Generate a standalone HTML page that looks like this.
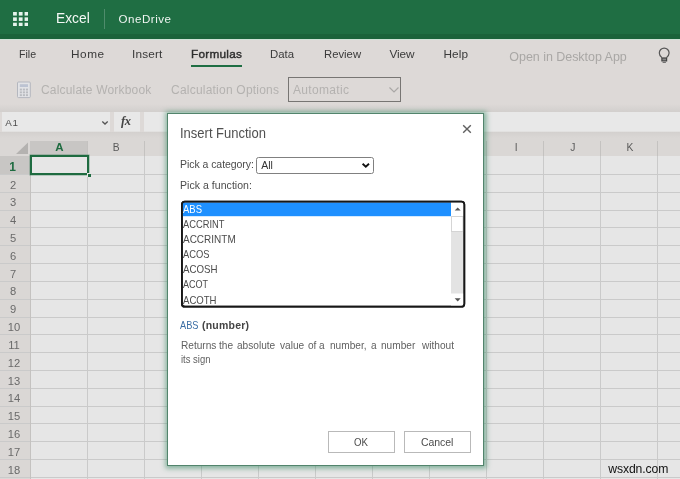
<!DOCTYPE html>
<html><head><meta charset="utf-8"><title>Excel - Insert Function</title>
<style>
html,body{margin:0;padding:0}
body{width:680px;height:479px;position:relative;overflow:hidden;background:#e6e6e6;font-family:"Liberation Sans",sans-serif}
.a{position:absolute}
.t{transform-origin:0 0;position:absolute;white-space:pre;line-height:20px;font-family:"Liberation Sans",sans-serif}
#hdr{left:0;top:0;width:680px;height:39px;background:#1f6e43}
#hdrb{left:0;top:33.5px;width:680px;height:5.5px;background:#1b633b}
#hdrl{left:0;top:39px;width:680px;height:1px;background:#cfe2d7}
#rib{left:0;top:39px;width:680px;height:73px;background:#ddd9d7}
#ribsh{left:0;top:104px;width:680px;height:8px;background:linear-gradient(#ddd9d7,#d2cfcd)}
#fbar{left:0;top:112px;width:680px;height:20px;background:#ddd9d7}
.fb{position:absolute;top:112px;height:19px;background:#e8e8e8;border-bottom:1px solid #e2e1e0}
#colh{left:0;top:132px;width:680px;height:24px;background:#dad7d5}
#colhg{left:0;top:132px;width:680px;height:6px;background:linear-gradient(#d3d0ce,#dad7d5)}
#rowh{left:0;top:156px;width:30px;height:324px;background:#dad7d5}
#selc{left:30px;top:141px;width:57px;height:15px;background:#c8c6c4}
#selr{left:0;top:156px;width:30px;height:18.5px;background:#c8c6c4}
.hl{position:absolute;left:0;width:680px;height:1px;background:#cacaca}
.vl{position:absolute;top:156px;width:1px;height:324px;background:#cacaca}
.hs{position:absolute;top:141px;width:1px;height:15px;background:#c4c2c0}
#rhl{left:29.5px;top:156px;width:1px;height:324px;background:#c4c2c0}
#cell{left:30px;top:155px;width:55px;height:16px;border:2px solid #1e6b40;box-shadow:0 0 0 .5px rgba(30,107,64,.5)}
#hand{left:86.5px;top:173px;width:3px;height:3px;background:#1e6b40;border:1px solid #e6e6e6;border-right:0;border-bottom:0}
#dlg{left:167px;top:113px;width:315px;height:351px;background:#fff;border:1px solid #52846c;box-shadow:0 0 5px 2.5px rgba(50,135,95,.55)}
#sel{left:256px;top:157px;width:116px;height:15px;border:1px solid #808080;border-radius:2.5px;background:#fff}
.btn{position:absolute;top:431px;width:65px;height:20px;border:1px solid #b9b9b9;background:#fff}
#ribsel{left:288px;top:77px;width:111px;height:23px;border:1px solid #777573}
#ful{left:191px;top:64.6px;width:50.5px;height:2.4px;background:#1f6e43}
#sep{left:104.3px;top:9px;width:1px;height:20px;background:#4f8c6c}
#w{position:absolute;left:0;top:0;width:680px;height:479px;overflow:hidden;will-change:transform}
</style></head><body><div id="w">
<div class="a" id="hdr"></div><div class="a" id="hdrb"></div>
<div class="a" id="rib"></div><div class="a" id="hdrl"></div><div class="a" id="ribsh"></div>
<div class="a" id="fbar"></div>
<div class="fb" style="left:2px;width:107.5px"></div>
<div class="fb" style="left:113.5px;width:26.5px"></div>
<div class="fb" style="left:143.5px;width:537px"></div>
<div class="a" id="colh"></div><div class="a" id="colhg"></div>
<div class="a" id="rowh"></div>
<div class="a" id="selc"></div><div class="a" id="selr"></div>
<div class="hl" style="top:174.00px"></div><div class="hl" style="top:191.82px"></div><div class="hl" style="top:209.64px"></div><div class="hl" style="top:227.46px"></div><div class="hl" style="top:245.28px"></div><div class="hl" style="top:263.10px"></div><div class="hl" style="top:280.92px"></div><div class="hl" style="top:298.74px"></div><div class="hl" style="top:316.56px"></div><div class="hl" style="top:334.38px"></div><div class="hl" style="top:352.20px"></div><div class="hl" style="top:370.02px"></div><div class="hl" style="top:387.84px"></div><div class="hl" style="top:405.66px"></div><div class="hl" style="top:423.48px"></div><div class="hl" style="top:441.30px"></div><div class="hl" style="top:459.12px"></div><div class="hl" style="top:476.94px"></div>
<div class="vl" style="left:86.60px"></div><div class="hs" style="left:86.60px"></div><div class="vl" style="left:143.67px"></div><div class="hs" style="left:143.67px"></div><div class="vl" style="left:200.74px"></div><div class="hs" style="left:200.74px"></div><div class="vl" style="left:257.81px"></div><div class="hs" style="left:257.81px"></div><div class="vl" style="left:314.88px"></div><div class="hs" style="left:314.88px"></div><div class="vl" style="left:371.95px"></div><div class="hs" style="left:371.95px"></div><div class="vl" style="left:429.02px"></div><div class="hs" style="left:429.02px"></div><div class="vl" style="left:486.09px"></div><div class="hs" style="left:486.09px"></div><div class="vl" style="left:543.16px"></div><div class="hs" style="left:543.16px"></div><div class="vl" style="left:600.23px"></div><div class="hs" style="left:600.23px"></div><div class="vl" style="left:657.30px"></div><div class="hs" style="left:657.30px"></div>
<div class="a" id="rhl"></div>
<svg class="a" style="left:15px;top:142px" width="14" height="13" viewBox="0 0 14 13"><polygon points="13,0.5 13,12 1,12" fill="#b4b2b0"/></svg>
<div class="a" id="cell"></div><div class="a" id="hand"></div>
<!-- header icons -->
<svg class="a" style="left:12.9px;top:11.9px" width="15.5" height="14.4" viewBox="0 0 15.5 14.5">
<g fill="#e6f4ec">
<rect x="0" y="0" width="3.8" height="3.6"/><rect x="5.8" y="0" width="3.8" height="3.6"/><rect x="11.6" y="0" width="3.8" height="3.6"/>
<rect x="0" y="5.4" width="3.8" height="3.6"/><rect x="5.8" y="5.4" width="3.8" height="3.6"/><rect x="11.6" y="5.4" width="3.8" height="3.6"/>
<rect x="0" y="10.8" width="3.8" height="3.6"/><rect x="5.8" y="10.8" width="3.8" height="3.6"/><rect x="11.6" y="10.8" width="3.8" height="3.6"/>
</g></svg>
<div class="a" id="sep"></div>
<div class="a" id="ful"></div>
<!-- lightbulb -->
<svg class="a" style="left:656px;top:45px" width="16" height="20" viewBox="0 0 16 20">
<path d="M5.9 12.6 C4.3 11.3 3.3 9.8 3.3 8 A4.9 4.9 0 0 1 13.1 8 C13.1 9.8 12.1 11.3 10.5 12.6" fill="none" stroke="#555" stroke-width="1.2"/>
<rect x="5.9" y="13" width="4.7" height="2.9" fill="#8a8a8a" stroke="#444" stroke-width="1.2"/>
<rect x="6.6" y="17" width="3.3" height="0.9" fill="#666"/>
</svg>
<!-- calc icon -->
<svg class="a" style="left:15.5px;top:80.5px" width="16" height="18" viewBox="0 0 16 18">
<rect x="1.5" y="1" width="12.8" height="15.6" rx="1" fill="#e2e3e6" stroke="#b4b7bf" stroke-width="1"/>
<rect x="3.8" y="3.2" width="8.2" height="2.8" fill="#bcc3d2"/>
<g fill="#b9bbc0"><rect x="3.8" y="7.6" width="2.1" height="1.9"/><rect x="6.85" y="7.6" width="2.1" height="1.9"/><rect x="9.9" y="7.6" width="2.1" height="1.9"/>
<rect x="3.8" y="10.4" width="2.1" height="1.9"/><rect x="6.85" y="10.4" width="2.1" height="1.9"/><rect x="9.9" y="10.4" width="2.1" height="1.9"/>
<rect x="3.8" y="13.2" width="2.1" height="1.9"/><rect x="6.85" y="13.2" width="2.1" height="1.9"/><rect x="9.9" y="13.2" width="2.1" height="1.9"/></g>
</svg>
<div class="a" id="ribsel"></div>
<svg class="a" style="left:388px;top:86px" width="12" height="8" viewBox="0 0 12 8"><path d="M1.5 1.5 L6 6 L10.5 1.5" fill="none" stroke="#aaa8a6" stroke-width="1.2"/></svg>
<!-- name box chevron / fx -->
<svg class="a" style="left:101px;top:120px" width="8" height="6" viewBox="0 0 8 6"><path d="M1.3 1.5 L4 4 L6.7 1.5" fill="none" stroke="#555" stroke-width="1.3"/></svg>
<span class="t" style="left:121px;top:111px;font-family:'Liberation Serif',serif;font-style:italic;font-weight:700;font-size:12.5px;color:#444;letter-spacing:-0.3px">fx</span>
<span class="t" style="left:55.61px;top:8.00px;font-size:15.5px;color:#f4f8f5;transform:scaleX(0.8914);">Excel</span>
<span class="t" style="left:118.50px;top:9.00px;font-size:11.6px;color:#f0f5f2;letter-spacing:0.497px;">OneDrive</span>
<span class="t" style="left:18.50px;top:44.00px;font-size:11.8px;color:#3a3a3a;transform:scaleX(0.8998);">File</span>
<span class="t" style="left:71.00px;top:44.00px;font-size:11.8px;color:#3a3a3a;letter-spacing:0.564px;">Home</span>
<span class="t" style="left:132.00px;top:44.00px;font-size:11.8px;color:#3a3a3a;letter-spacing:0.155px;">Insert</span>
<span class="t" style="left:191.00px;top:44.00px;font-size:11.8px;color:#2e2e2e;letter-spacing:0.248px;-webkit-text-stroke:0.4px #2e2e2e;">Formulas</span>
<span class="t" style="left:270.00px;top:44.00px;font-size:11.8px;color:#3a3a3a;transform:scaleX(0.9662);">Data</span>
<span class="t" style="left:324.00px;top:44.00px;font-size:11.8px;color:#3a3a3a;transform:scaleX(0.9576);">Review</span>
<span class="t" style="left:389.50px;top:44.00px;font-size:11.8px;color:#3a3a3a;letter-spacing:-0.112px;">View</span>
<span class="t" style="left:443.50px;top:44.00px;font-size:11.8px;color:#3a3a3a;letter-spacing:0.100px;">Help</span>
<span class="t" style="left:509.30px;top:47.00px;font-size:12.5px;color:#a9a7a5;letter-spacing:-0.037px;">Open in Desktop App</span>
<span class="t" style="left:41.00px;top:80.00px;font-size:12px;color:#b4b2b0;letter-spacing:0.185px;">Calculate Workbook</span>
<span class="t" style="left:171.00px;top:80.00px;font-size:12px;color:#b4b2b0;letter-spacing:0.219px;">Calculation Options</span>
<span class="t" style="left:293.00px;top:80.00px;font-size:12px;color:#b4b2b0;letter-spacing:0.331px;">Automatic</span>
<span class="t" style="left:5.20px;top:113.00px;font-size:9.8px;color:#4c4c4c;letter-spacing:0.800px;">A1</span>
<span class="t" style="left:608.30px;top:459.00px;font-size:12.2px;color:#111;letter-spacing:-0.113px;">wsxdn.com</span>
<span class="t" style="left:55.20px;top:137.00px;font-size:11.5px;color:#1e6b40;font-weight:700;">A</span>
<span class="t" style="left:112.77px;top:138.00px;font-size:10.3px;color:#5a5a5a;">B</span>
<span class="t" style="left:169.34px;top:138.00px;font-size:10.3px;color:#5a5a5a;">C</span>
<span class="t" style="left:226.91px;top:138.00px;font-size:10.3px;color:#5a5a5a;">D</span>
<span class="t" style="left:283.98px;top:138.00px;font-size:10.3px;color:#5a5a5a;">E</span>
<span class="t" style="left:341.55px;top:138.00px;font-size:10.3px;color:#5a5a5a;">F</span>
<span class="t" style="left:397.62px;top:138.00px;font-size:10.3px;color:#5a5a5a;">G</span>
<span class="t" style="left:455.19px;top:138.00px;font-size:10.3px;color:#5a5a5a;">H</span>
<span class="t" style="left:514.76px;top:138.00px;font-size:10.3px;color:#5a5a5a;">I</span>
<span class="t" style="left:570.33px;top:138.00px;font-size:10.3px;color:#5a5a5a;">J</span>
<span class="t" style="left:626.40px;top:138.00px;font-size:10.3px;color:#5a5a5a;">K</span>
<span class="t" style="left:9.30px;top:157.00px;font-size:12px;color:#1e6b40;font-weight:700;">1</span>
<span class="t" style="left:10.00px;top:175.00px;font-size:11.2px;color:#6a6a6a;">2</span>
<span class="t" style="left:10.00px;top:192.00px;font-size:11.2px;color:#6a6a6a;">3</span>
<span class="t" style="left:10.00px;top:210.00px;font-size:11.2px;color:#6a6a6a;">4</span>
<span class="t" style="left:10.00px;top:228.00px;font-size:11.2px;color:#6a6a6a;">5</span>
<span class="t" style="left:10.00px;top:246.00px;font-size:11.2px;color:#6a6a6a;">6</span>
<span class="t" style="left:10.00px;top:264.00px;font-size:11.2px;color:#6a6a6a;">7</span>
<span class="t" style="left:10.00px;top:281.00px;font-size:11.2px;color:#6a6a6a;">8</span>
<span class="t" style="left:10.00px;top:299.00px;font-size:11.2px;color:#6a6a6a;">9</span>
<span class="t" style="left:7.79px;top:317.00px;font-size:11.2px;color:#6a6a6a;">10</span>
<span class="t" style="left:8.20px;top:335.00px;font-size:11.2px;color:#6a6a6a;">11</span>
<span class="t" style="left:7.79px;top:353.00px;font-size:11.2px;color:#6a6a6a;">12</span>
<span class="t" style="left:7.79px;top:371.00px;font-size:11.2px;color:#6a6a6a;">13</span>
<span class="t" style="left:7.79px;top:388.00px;font-size:11.2px;color:#6a6a6a;">14</span>
<span class="t" style="left:7.79px;top:406.00px;font-size:11.2px;color:#6a6a6a;">15</span>
<span class="t" style="left:7.79px;top:424.00px;font-size:11.2px;color:#6a6a6a;">16</span>
<span class="t" style="left:7.79px;top:442.00px;font-size:11.2px;color:#6a6a6a;">17</span>
<span class="t" style="left:7.79px;top:460.00px;font-size:11.2px;color:#6a6a6a;">18</span>
<!-- dialog -->
<div class="a" id="dlg"></div>
<svg class="a" style="left:462px;top:124px" width="10" height="10" viewBox="0 0 10 10"><path d="M1.2 1.2 L8.8 8.8 M8.8 1.2 L1.2 8.8" stroke="#606060" stroke-width="1.4" fill="none"/></svg>
<div class="a" id="sel"></div>
<svg class="a" style="left:361px;top:162px" width="10" height="7" viewBox="0 0 10 7"><path d="M1.6 1.8 L4.8 4.7 L8 1.8" fill="none" stroke="#111" stroke-width="1.9"/></svg>
<svg class="a" style="left:180px;top:199px" width="288" height="111" viewBox="180 199 288 111">
<rect x="181.9" y="201.6" width="282.4" height="105.1" rx="3" fill="#fff" stroke="#171717" stroke-width="1.8"/>
<rect x="182.8" y="202.5" width="268.2" height="13.7" fill="#1e90ff"/>
<rect x="451" y="202.5" width="12.4" height="103.4" fill="#e3e3e3"/>
<rect x="451" y="202.5" width="12.4" height="13.7" fill="#fff"/>
<rect x="451.4" y="216.6" width="11.6" height="14.8" fill="#fff" stroke="#cdcdcd" stroke-width=".8"/>
<rect x="451" y="293.5" width="12.4" height="12.4" fill="#fff"/>
<polygon points="454.7,210.5 460.7,210.5 457.7,207.6" fill="#555"/>
<polygon points="454.7,298.3 460.7,298.3 457.7,301.4" fill="#555"/>
<rect x="181.9" y="201.6" width="282.4" height="105.1" rx="3" fill="none" stroke="#171717" stroke-width="1.8"/>
</svg>
<div class="btn" style="left:328px"></div><div class="btn" style="left:404px"></div>
<span class="t" style="left:179.77px;top:123.00px;font-size:14px;color:#505050;transform:scaleX(0.9283);">Insert Function</span>
<span class="t" style="left:180.00px;top:154.00px;font-size:10.5px;color:#4c4c4c;letter-spacing:-0.052px;">Pick a category:</span>
<span class="t" style="left:261.20px;top:155.00px;font-size:10.5px;color:#333;letter-spacing:0.032px;">All</span>
<span class="t" style="left:180.00px;top:175.00px;font-size:10.5px;color:#4c4c4c;letter-spacing:0.048px;">Pick a function:</span>
<span class="t" style="left:183.00px;top:199.00px;font-size:10.5px;color:#fff;transform:scaleX(0.9045);">ABS</span>
<span class="t" style="left:183.00px;top:214.00px;font-size:10.5px;color:#4c4c4c;transform:scaleX(0.8889);">ACCRINT</span>
<span class="t" style="left:183.00px;top:229.00px;font-size:10.5px;color:#4c4c4c;transform:scaleX(0.9512);">ACCRINTM</span>
<span class="t" style="left:183.00px;top:244.00px;font-size:10.5px;color:#4c4c4c;transform:scaleX(0.8907);">ACOS</span>
<span class="t" style="left:183.00px;top:259.00px;font-size:10.5px;color:#4c4c4c;transform:scaleX(0.9250);">ACOSH</span>
<span class="t" style="left:183.00px;top:274.00px;font-size:10.5px;color:#4c4c4c;transform:scaleX(0.8604);">ACOT</span>
<span class="t" style="left:183.00px;top:290.00px;font-size:10.5px;color:#4c4c4c;transform:scaleX(0.9124);">ACOTH</span>
<span class="t" style="left:180.00px;top:315.00px;font-size:10.5px;color:#3b6ea5;transform:scaleX(0.8807);">ABS</span>
<span class="t" style="left:202.00px;top:315.00px;font-size:10.5px;color:#444;font-weight:700;letter-spacing:0.214px;">(number)</span>
<span class="t" style="left:180.98px;top:335.00px;font-size:10.5px;color:#606060;transform:scaleX(0.9624);">Returns</span>
<span class="t" style="left:218.90px;top:335.00px;font-size:10.5px;color:#606060;transform:scaleX(0.9624);">the</span>
<span class="t" style="left:237.07px;top:335.00px;font-size:10.5px;color:#606060;transform:scaleX(0.9624);">absolute</span>
<span class="t" style="left:279.74px;top:335.00px;font-size:10.5px;color:#606060;transform:scaleX(0.9624);">value</span>
<span class="t" style="left:307.85px;top:335.00px;font-size:10.5px;color:#606060;transform:scaleX(0.9624);">of</span>
<span class="t" style="left:319.41px;top:335.00px;font-size:10.5px;color:#606060;transform:scaleX(0.9624);">a</span>
<span class="t" style="left:330.09px;top:335.00px;font-size:10.5px;color:#606060;transform:scaleX(0.9624);">number,</span>
<span class="t" style="left:370.86px;top:335.00px;font-size:10.5px;color:#606060;transform:scaleX(0.9624);">a</span>
<span class="t" style="left:380.53px;top:335.00px;font-size:10.5px;color:#606060;transform:scaleX(0.9624);">number</span>
<span class="t" style="left:421.83px;top:335.00px;font-size:10.5px;color:#606060;transform:scaleX(0.9624);">without</span>
<span class="t" style="left:180.90px;top:349.00px;font-size:10.5px;color:#606060;transform:scaleX(0.9014);">its sign</span>
<span class="t" style="left:354.00px;top:432.00px;font-size:10.5px;color:#4c4c4c;transform:scaleX(0.9230);">OK</span>
<span class="t" style="left:421.00px;top:432.00px;font-size:10.5px;color:#4c4c4c;letter-spacing:-0.070px;">Cancel</span>
</div></body></html>
